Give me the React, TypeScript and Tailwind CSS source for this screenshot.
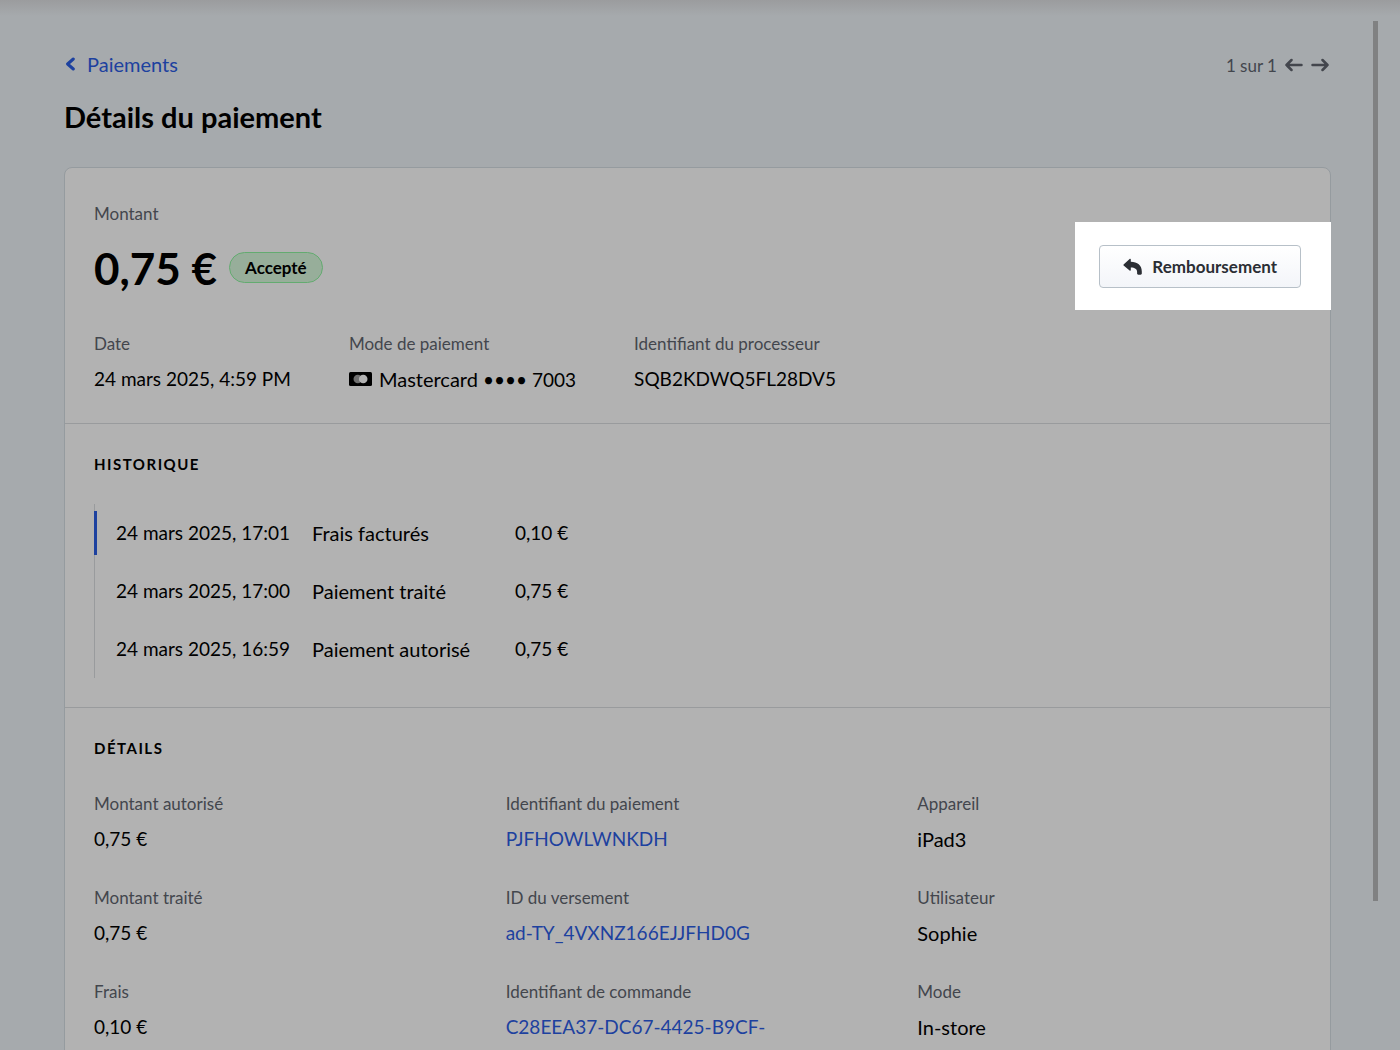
import React from "react";

const payments = [
  { date: "24 mars 2025, 17:01", label: "Frais facturés", amount: "0,10 €", current: true },
  { date: "24 mars 2025, 17:00", label: "Paiement traité", amount: "0,75 €", current: false },
  { date: "24 mars 2025, 16:59", label: "Paiement autorisé", amount: "0,75 €", current: false },
];

type Detail = { label: string; value: string; kind: "number" | "link" | "text" };

const details: Detail[] = [
  { label: "Montant autorisé", value: "0,75 €", kind: "number" },
  { label: "Identifiant du paiement", value: "PJFHOWLWNKDH", kind: "link" },
  { label: "Appareil", value: "iPad3", kind: "text" },
  { label: "Montant traité", value: "0,75 €", kind: "number" },
  { label: "ID du versement", value: "ad-TY_4VXNZ166EJJFHD0G", kind: "link" },
  { label: "Utilisateur", value: "Sophie", kind: "text" },
  { label: "Frais", value: "0,10 €", kind: "number" },
  { label: "Identifiant de commande", value: "C28EEA37-DC67-4425-B9CF-", kind: "link" },
  { label: "Mode", value: "In-store", kind: "text" },
];

function Field({ label, children }: { label: string; children: React.ReactNode }) {
  return (
    <div>
      <dt className="mb-[7px] text-[17px] leading-[26px] text-[#43464d]">{label}</dt>
      <dd className="flex h-[30px] items-center text-xl leading-[30px]">{children}</dd>
    </div>
  );
}

function ChevronIcon() {
  return (
    <svg width="12" height="14" viewBox="0 0 12 14" fill="none" stroke="currentColor" strokeWidth="3" strokeLinecap="round" strokeLinejoin="round" aria-hidden="true">
      <path d="M9.300 2 3.600 7l5.700 5" />
    </svg>
  );
}

function ArrowIcon({ right = false }: { right?: boolean }) {
  return (
    <svg width="18" height="14" viewBox="0 0 18 14" fill="none" stroke="currentColor" strokeWidth="2.5" strokeLinecap="round" strokeLinejoin="round" aria-hidden="true">
      {right ? <path d="M1.500 7h15M11.500 2l5 5-5 5" /> : <path d="M16.500 7h-15M6.500 2l-5 5 5 5" />}
    </svg>
  );
}

function ReplyIcon() {
  return (
    <svg width="20" height="18" viewBox="0 0 20 18" fill="currentColor" aria-hidden="true">
      <path d="M.6 6.400 6.600 1c.6-.5 1.200-.2 1.200.5v2.300c6.600 0 11 3.600 11 9.600v2.200c0 .7-.5 1.200-1.200 1.200h-2.300c-.7 0-1.200-.5-1.200-1.200v-1.500c0-3-2.300-4.600-6.300-4.600v2.500c0 .7-.6 1-1.200.5L.6 7.400c-.3-.3-.3-.7 0-1z" />
    </svg>
  );
}

function CardIcon() {
  return (
    <svg width="23" height="14" viewBox="0 0 23 14" aria-hidden="true">
      <rect width="23" height="14" rx="1.5" fill="#000" />
      <circle cx="8.800" cy="7" r="4.300" fill="#6f6f6f" />
      <circle cx="14.200" cy="7" r="4.300" fill="#b2b2b2" />
    </svg>
  );
}

export default function App() {
  return (
    <div className="relative flex h-screen overflow-hidden bg-[#a6aaad] font-['Lato',sans-serif] text-black">
      <div className="pointer-events-none absolute inset-x-0 top-0 h-4 bg-linear-to-b from-[#9b9c9e] to-[#a6aaad]" />
      <main className="min-w-0 flex-1 overflow-y-auto pt-[49px] pr-[42px] pl-16 [scrollbar-width:none]">
        <header className="flex items-start justify-between">
          <a href="#paiements" className="flex items-center gap-[11px] text-xl leading-[30px] text-[#1d419f]">
            <ChevronIcon />
            Paiements
          </a>
          <nav aria-label="Pagination" className="flex items-center gap-2 pr-0.5 text-[17px] leading-[30px] text-[#43464d]">
            <span className="pt-0.5">1 sur 1</span>
            <button type="button" aria-label="Précédent"><ArrowIcon /></button>
            <button type="button" aria-label="Suivant"><ArrowIcon right /></button>
          </nav>
        </header>
        <h1 className="mt-[14px] text-[29px] leading-[44px] font-bold">Détails du paiement</h1>

        <div className="mt-7 divide-y divide-[#999b9d] rounded-t-lg border border-[#959b9f] bg-[#b2b2b2]">
          <section className="px-[29px] pt-[33px] pb-[29px]">
            <div className="flex items-start justify-between">
              <div>
                <p className="text-[17px] leading-[26px] text-[#43464d]">Montant</p>
                <div className="mt-3 flex items-center gap-3">
                  <p className="text-[44px] leading-[58px] font-bold">0,75 €</p>
                  <span className="mb-0.5 rounded-full border border-[#63ab70] bg-[#97ae9a] px-[15px] text-[17px] leading-[29px] font-bold">Accepté</span>
                </div>
              </div>
              <div className="mt-[21px] -mr-[30px] bg-white pt-[23px] pr-[30px] pb-[22px] pl-6">
                <button
                  type="button"
                  className="flex h-[43px] items-center gap-[9px] rounded border border-[#b7c0c8] bg-linear-to-b from-white to-[#f3f5f9] px-[23px] text-[17px] font-bold text-[#2b2e34]"
                >
                  <ReplyIcon />
                  Remboursement
                </button>
              </div>
            </div>
            <dl className="mt-[21px] flex gap-[58px]">
              <Field label="Date"><span className="text-[19px]">24 mars 2025, 4:59 PM</span></Field>
              <Field label="Mode de paiement">
                <CardIcon />
                <span className="pl-[7px]">Mastercard <span className="text-[19px]">•••• 7003</span></span>
              </Field>
              <Field label="Identifiant du processeur"><span className="text-[19px]">SQB2KDWQ5FL28DV5</span></Field>
            </dl>
          </section>

          <section className="px-[29px] pt-[29px] pb-[29px]">
            <h2 className="text-[15px] leading-[22px] font-bold tracking-[1.5px] uppercase">Historique</h2>
            <div className="mt-[29px] border-l border-[#999b9d]">
              <table className="text-[19px] leading-[30px]">
                <tbody>
                  {payments.map((p) => (
                    <tr key={p.date} className="h-[58px]">
                      <td className="relative pr-[22px] pl-[21px]">
                        {p.current && <span className="absolute top-[7px] -left-px h-11 w-[3px] bg-[#1d419f]" />}
                        {p.date}
                      </td>
                      <td className="w-[203px] text-xl leading-[30px]">{p.label}</td>
                      <td>{p.amount}</td>
                    </tr>
                  ))}
                </tbody>
              </table>
            </div>
          </section>

          <section className="px-[29px] pt-[29px] pb-12">
            <h2 className="text-[15px] leading-[22px] font-bold tracking-[1.5px] uppercase">Détails</h2>
            <dl className="mt-8 grid grid-cols-3 gap-x-7 gap-y-[31px]">
              {details.map((d) => (
                <Field key={d.label} label={d.label}>
                  {d.kind === "link" && <a href="#detail" className="text-[19px] text-[#1d419f]">{d.value}</a>}
                  {d.kind === "number" && <span className="text-[19px]">{d.value}</span>}
                  {d.kind === "text" && d.value}
                </Field>
              ))}
            </dl>
          </section>
        </div>
      </main>
      <div aria-hidden="true" className="mt-[21px] mr-[22px] h-[calc(100%-170px)] w-[5px] shrink-0 bg-[#808182]" />
    </div>
  );
}
